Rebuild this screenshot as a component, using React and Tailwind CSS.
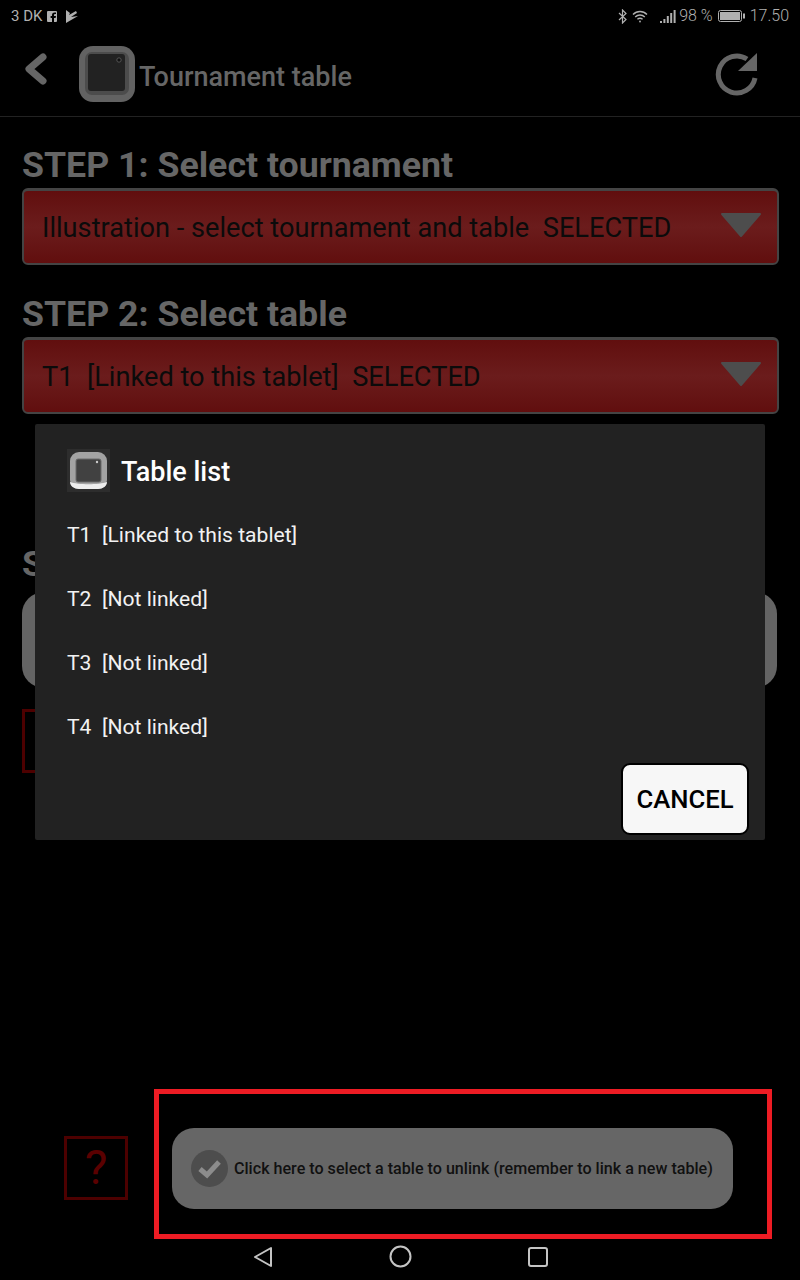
const tables = ["T1  [Linked to this tablet]", "T2  [Not linked]", "T3  [Not linked]", "T4  [Not linked]"];

function AppIcon({ big }) {
  if (big) {
    return (
      <svg width="58" height="58" viewBox="0 0 58 58">
        <rect x="1" y="1" width="56" height="56" rx="14" fill="#626262" />
        <rect x="7" y="7" width="44" height="43" rx="7" fill="#4c4c4c" />
        <rect x="10" y="9" width="37" height="37" rx="3" fill="#222222" />
        <circle cx="41" cy="15" r="2.2" fill="#111111" stroke="#555555" />
      </svg>
    );
  }
  return (
    <div className="w-[43px] h-[43px] bg-[#2d2d2d] flex items-center justify-center shrink-0">
      <svg width="39" height="39" viewBox="0 0 39 39">
        <rect x="1" y="1" width="37" height="37" rx="9" fill="#a3a3a3" />
        <path d="M1 31 C1 35 5 38 10 38 H29 C34 38 38 35 38 31 C30 34 9 34 1 31 Z" fill="#ededed" />
        <rect x="7" y="8" width="25" height="23" rx="2" fill="#414141" stroke="#6a6a6a" />
        <circle cx="28" cy="11" r="1.2" fill="#cccccc" />
      </svg>
    </div>
  );
}

function StatusBar() {
  return (
    <div className="h-8 flex items-center justify-between pl-[11px] pr-[11px] text-[#b0b0b0]">
      <div className="flex items-center text-[15px]">
        <span>3 DK</span>
        <svg className="ml-[5px]" width="10" height="11" viewBox="0 0 10 11">
          <path d="M0 1 Q0 0 1 0 H9 Q10 0 10 1 V10 Q10 11 9 11 H7 V7 H8.6 L9 5 H7 V4 Q7 3 8 3 H9 V1.4 H7.5 Q5 1.4 5 4 V5 H3.6 V7 H5 V11 H1 Q0 11 0 10 Z" fill="#b0b0b0" />
        </svg>
        <svg className="ml-[9px]" width="12" height="13" viewBox="0 0 12 13">
          <path d="M0 0 L4 3 L3 5 L10 1 L11 3 L5 7 L12 6 L0 13 Z" fill="#b0b0b0" />
        </svg>
      </div>
      <div className="flex items-center text-[16px] font-light">
        <svg width="9" height="15" viewBox="0 0 9 15" fill="none" stroke="#b0b0b0" strokeWidth="1.2">
          <path d="M1 4 L8 10.5 L4.5 14 V1 L8 4.5 L1 11" />
        </svg>
        <svg className="ml-[5px]" width="16" height="13" viewBox="0 0 16 13" fill="none" stroke="#b0b0b0" strokeWidth="1.4">
          <path d="M1 4.5 C5 0.5 11 0.5 15 4.5" />
          <path d="M3.2 7 C6 4.3 10 4.3 12.8 7" />
          <path d="M5.4 9.3 C7 8 9 8 10.6 9.3" />
          <circle cx="8" cy="11.5" r="0.9" fill="#b0b0b0" stroke="none" />
        </svg>
        <svg className="ml-[12px]" width="16" height="13" viewBox="0 0 16 13" fill="#b0b0b0">
          <rect x="0" y="11" width="2" height="2" />
          <rect x="3.4" y="9" width="2" height="4" />
          <rect x="6.8" y="6" width="2" height="7" />
          <rect x="10.2" y="3" width="2" height="10" />
          <rect x="13.6" y="0" width="2" height="13" />
        </svg>
        <span className="ml-[3px]">98 %</span>
        <svg className="ml-[5px]" width="27" height="12" viewBox="0 0 27 12">
          <rect x="0.5" y="0.5" width="23" height="11" rx="2" fill="none" stroke="#b0b0b0" />
          <rect x="2" y="2" width="20" height="8" fill="#b0b0b0" />
          <rect x="25" y="3.5" width="2" height="5" fill="#b0b0b0" />
        </svg>
        <span className="ml-[5px]">17.50</span>
      </div>
    </div>
  );
}

function Dropdown({ label }) {
  return (
    <div className="h-[77px] rounded-[6px] border-2 border-t-[3px] border-[#444444] bg-linear-to-b from-[#610e0e] via-[#6b1c1c] to-[#610e0e] flex items-center justify-between pl-[18px] pr-[15px]">
      <span className="text-[27.2px] text-[#0b0b0b] whitespace-pre mt-[2px]">{label}</span>
      <svg className="mt-[-4px]" width="42" height="26" viewBox="0 0 42 26">
        <path d="M2 2 H40 L21 24 Z" fill="#4d4d4d" stroke="#4d4d4d" strokeWidth="2" strokeLinejoin="round" />
      </svg>
    </div>
  );
}

export default function App() {
  return (
    <div className="relative w-[800px] h-[1280px] bg-black flex flex-col overflow-hidden font-['Roboto',sans-serif]">
      <StatusBar />

      <div className="h-[85px] border-b border-[#222222] flex items-center pl-[23px] pr-[41px]">
        <svg className="mt-[-11px]" width="26" height="38" viewBox="0 0 26 38" fill="none" stroke="#666666" strokeWidth="7" strokeLinecap="round" strokeLinejoin="round">
          <polyline points="20,7 6,19 20,31" />
        </svg>
        <div className="ml-[29px]">
          <AppIcon big />
        </div>
        <span className="text-[27px] font-medium text-[#666666] ml-[3px] mt-[6px]">Tournament table</span>
        <svg className="ml-auto" width="44" height="44" viewBox="0 0 44 44" fill="none">
          <path d="M40 26 A18.5 18.5 0 1 1 32 7" stroke="#666666" strokeWidth="5" />
          <path d="M23 19 L42 1 V19 Z" fill="#666666" />
        </svg>
      </div>

      <div className="pl-[22px] pr-[21px] flex flex-col">
        <h1 className="text-[35.7px] font-bold text-[#666666] leading-[38px] mt-[29px] mb-[4px]">STEP 1: Select tournament</h1>
        <Dropdown label="Illustration - select tournament and table  SELECTED" />
        <h1 className="text-[35.7px] font-bold text-[#666666] leading-[38px] mt-[30px] mb-[4px]">STEP 2: Select table</h1>
        <Dropdown label="T1  [Linked to this tablet]  SELECTED" />
        <h1 className="text-[35.7px] font-bold text-[#666666] leading-[38px] mt-[131px] mb-[9px]">STEP 3</h1>
        <div className="h-[96px] w-[755px] rounded-[22px] bg-[#646464]" />
        <div className="w-[63px] h-[64px] border-[3px] border-[#4d0000] mt-[21px]" />
      </div>

      <div className="mt-auto flex items-center pl-[64px]">
        <div className="w-[64px] h-[64px] border-[3px] border-[#4d0000] flex items-center justify-center text-[48px] leading-none text-[#5a0000] mt-[8px]">?</div>
        <div className="ml-[26px] w-[618px] h-[150px] border-[5px] border-[#ed1c24] pl-[13px] pt-[34px]">
          <div className="w-[561px] h-[81px] rounded-[22px] bg-[#666666] flex items-center pl-[19px]">
            <svg width="37" height="37" viewBox="0 0 37 37">
              <circle cx="18.5" cy="18.5" r="18.5" fill="#4d4d4d" />
              <polyline points="9,19 16,25 28,12" fill="none" stroke="#8c8c8c" strokeWidth="5" />
            </svg>
            <span className="ml-[6px] mt-[1px] text-[16.13px] font-medium text-[#111111]">Click here to select a table to unlink (remember to link a new table)</span>
          </div>
        </div>
      </div>

      <div className="h-[41px] flex items-center pb-[6px]">
        <svg className="ml-[253px]" width="20" height="22" viewBox="0 0 20 22" fill="none" stroke="#c4c4c4" strokeWidth="2" strokeLinejoin="round">
          <path d="M18 2 V20 L2 11 Z" />
        </svg>
        <svg className="ml-[116px]" width="23" height="23" viewBox="0 0 23 23" fill="none" stroke="#c4c4c4" strokeWidth="2">
          <circle cx="11.5" cy="11.5" r="10" />
        </svg>
        <svg className="ml-[116px]" width="20" height="20" viewBox="0 0 20 20" fill="none" stroke="#c4c4c4" strokeWidth="2">
          <rect x="1" y="1" width="18" height="18" rx="2" />
        </svg>
      </div>

      {/* dialog over the page */}
      <div className="absolute left-[35px] top-[424px] w-[730px] h-[416px] bg-[#222222] rounded-[2px] flex flex-col pl-[32px] pr-[16px]">
        <div className="flex items-center mt-[25px]">
          <AppIcon />
          <span className="ml-[11px] text-[27px] leading-none font-medium text-white mt-[3px]">Table list</span>
        </div>
        <div className="mt-[11px] flex flex-col">
          {tables.map((t) => (
            <div key={t} className="h-[64px] flex items-center text-[21.1px] text-[#f2f2f2] whitespace-pre">{t}</div>
          ))}
        </div>
        <button type="button" className="self-end mt-[4px] w-[128px] h-[72px] rounded-[9px] border-2 border-black bg-[#f7f7f7] text-[25.7px] font-medium text-black">CANCEL</button>
      </div>
    </div>
  );
}
